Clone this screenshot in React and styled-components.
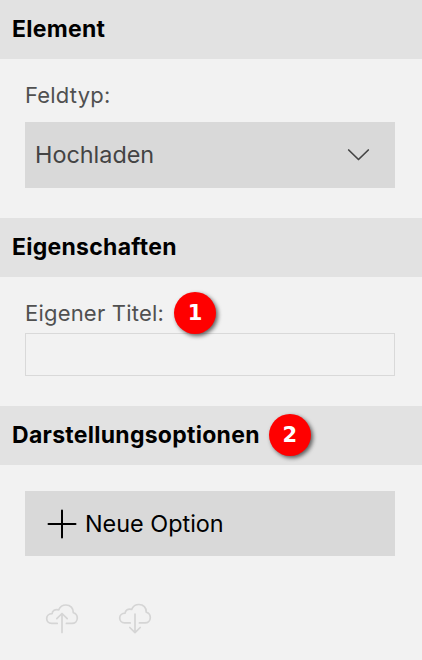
import React from "react";
import styled, { createGlobalStyle } from "styled-components";

const GlobalStyle = createGlobalStyle`
  *, *::before, *::after { box-sizing: border-box; }
  body { margin: 0; background: #f2f2f2; font-family: Inter, "Liberation Sans", sans-serif; }
`;

const Panel = styled.main`
  display: flex;
  flex-direction: column;
  width: 422px;
  height: 660px;
  overflow: hidden;
  background: #f2f2f2;
`;

const SectionHeader = styled.header`
  display: flex;
  align-items: center;
  flex: none;
  gap: 9px;
  height: 59px;
  padding: 0 0 1px 12px;
  background: #e2e2e2;
`;

const SectionTitle = styled.h2`
  margin: 0;
  color: #000;
  font-size: 23px;
  font-weight: 700;
  letter-spacing: 0.27px;
  line-height: 28px;
`;

const SectionBody = styled.section`
  display: flex;
  flex-direction: column;
  flex: none;
  height: ${(p) => p.$height}px;
  padding: ${(p) => p.$top}px 27px 0 25px;
`;

const LabelRow = styled.div`
  display: flex;
  align-items: center;
  gap: 10px;
  height: 28px;
`;

const Label = styled.label`
  color: #505050;
  font-size: 22px;
  font-weight: 440;
  letter-spacing: 0.2px;
  line-height: 28px;
`;

const Select = styled.button`
  display: flex;
  align-items: center;
  justify-content: space-between;
  height: 66px;
  margin-top: 13px;
  padding: 0 25px 0 10px;
  border: 0;
  background: #d9d9d9;
  color: #444;
  font: 400 23.4px/30px Inter, sans-serif;
`;

const TextInput = styled.input`
  width: 100%;
  height: 43px;
  margin-top: 6px;
  padding: 0 10px;
  border: 1px solid #d9d9d9;
  border-radius: 0;
  background: #f2f2f2;
  font: 400 22px Inter, sans-serif;
`;

const Badge = styled.span`
  z-index: 1;
  display: flex;
  align-items: center;
  justify-content: center;
  flex: none;
  width: 42px;
  height: 42px;
  border-radius: 50%;
  background: #f00;
  box-shadow: 2px 2px 4px rgba(0, 0, 0, 0.6);
  color: #fff;
  font: 700 21px/24px "DejaVu Sans", sans-serif;
`;

const AddButton = styled.button`
  display: flex;
  align-items: center;
  gap: 8px;
  height: 65px;
  padding: 0 22px;
  border: 0;
  background: #d9d9d9;
  color: #000;
  font: 400 23.4px/30px Inter, sans-serif;
`;

const Actions = styled.div`
  display: flex;
  gap: 37px;
  margin: 46px 0 0 19px;
`;

const IconButton = styled.button`
  display: flex;
  padding: 0;
  border: 0;
  background: none;
  color: #d5d5d5;
`;

const Glyph = styled.svg`
  display: block;
  flex: none;
  fill: none;
  stroke: currentColor;
  stroke-width: ${(p) => p.$weight}px;
  stroke-linecap: round;
  stroke-linejoin: round;
`;

function Cloud({ arrow, lift = 0 }) {
  return (
    <Glyph $weight={1.7} width="36" height="34" viewBox="0 0 36 34">
      <path
        transform={`translate(0 ${-lift})`}
        d="M13.2 21.4H7.6C4.6 21.4 2.7 19.2 2.7 16.6C2.7 13.8 4.9 11.7 8.1 11.7C8.2 8.7 11.1 6.8 14.7 7.9C16 4.8 18.7 3 22 3C26.4 3 29.4 6.2 29.3 10.7C31.8 11.4 33.3 13.5 33.3 16C33.3 19 31.1 21.4 28 21.4H22.4"
      />
      <path d={arrow} />
    </Glyph>
  );
}

export default function App() {
  return (
    <>
      <GlobalStyle />
      <Panel>
        <SectionHeader>
          <SectionTitle>Element</SectionTitle>
        </SectionHeader>
        <SectionBody $height={159} $top={22}>
          <LabelRow>
            <Label>Feldtyp:</Label>
          </LabelRow>
          <Select type="button">
            Hochladen
            <Glyph $weight={1.7} width="23" height="14" viewBox="0 0 23 14">
              <path d="M1.7 2L11.5 11.5L21.3 2" />
            </Glyph>
          </Select>
        </SectionBody>
        <SectionHeader>
          <SectionTitle>Eigenschaften</SectionTitle>
        </SectionHeader>
        <SectionBody $height={129} $top={22}>
          <LabelRow>
            <Label htmlFor="title">Eigener Titel:</Label>
            <Badge>1</Badge>
          </LabelRow>
          <TextInput id="title" />
        </SectionBody>
        <SectionHeader>
          <SectionTitle>Darstellungsoptionen</SectionTitle>
          <Badge>2</Badge>
        </SectionHeader>
        <SectionBody $height={195} $top={26}>
          <AddButton type="button">
            <Glyph $weight={2} width="30" height="30" viewBox="0 0 30 30">
              <path d="M15 1.5V28.5M1.5 15H28.5" />
            </Glyph>
            Neue Option
          </AddButton>
          <Actions>
            <IconButton type="button" aria-label="Hochladen">
              <Cloud arrow="M18 30.5V11.5M12.8 16.7L18 11.5L23.2 16.7" />
            </IconButton>
            <IconButton type="button" aria-label="Herunterladen">
              <Cloud lift={0.5} arrow="M18 12V30.5M12.8 25.5L18 30.7L23.2 25.5" />
            </IconButton>
          </Actions>
        </SectionBody>
      </Panel>
    </>
  );
}
